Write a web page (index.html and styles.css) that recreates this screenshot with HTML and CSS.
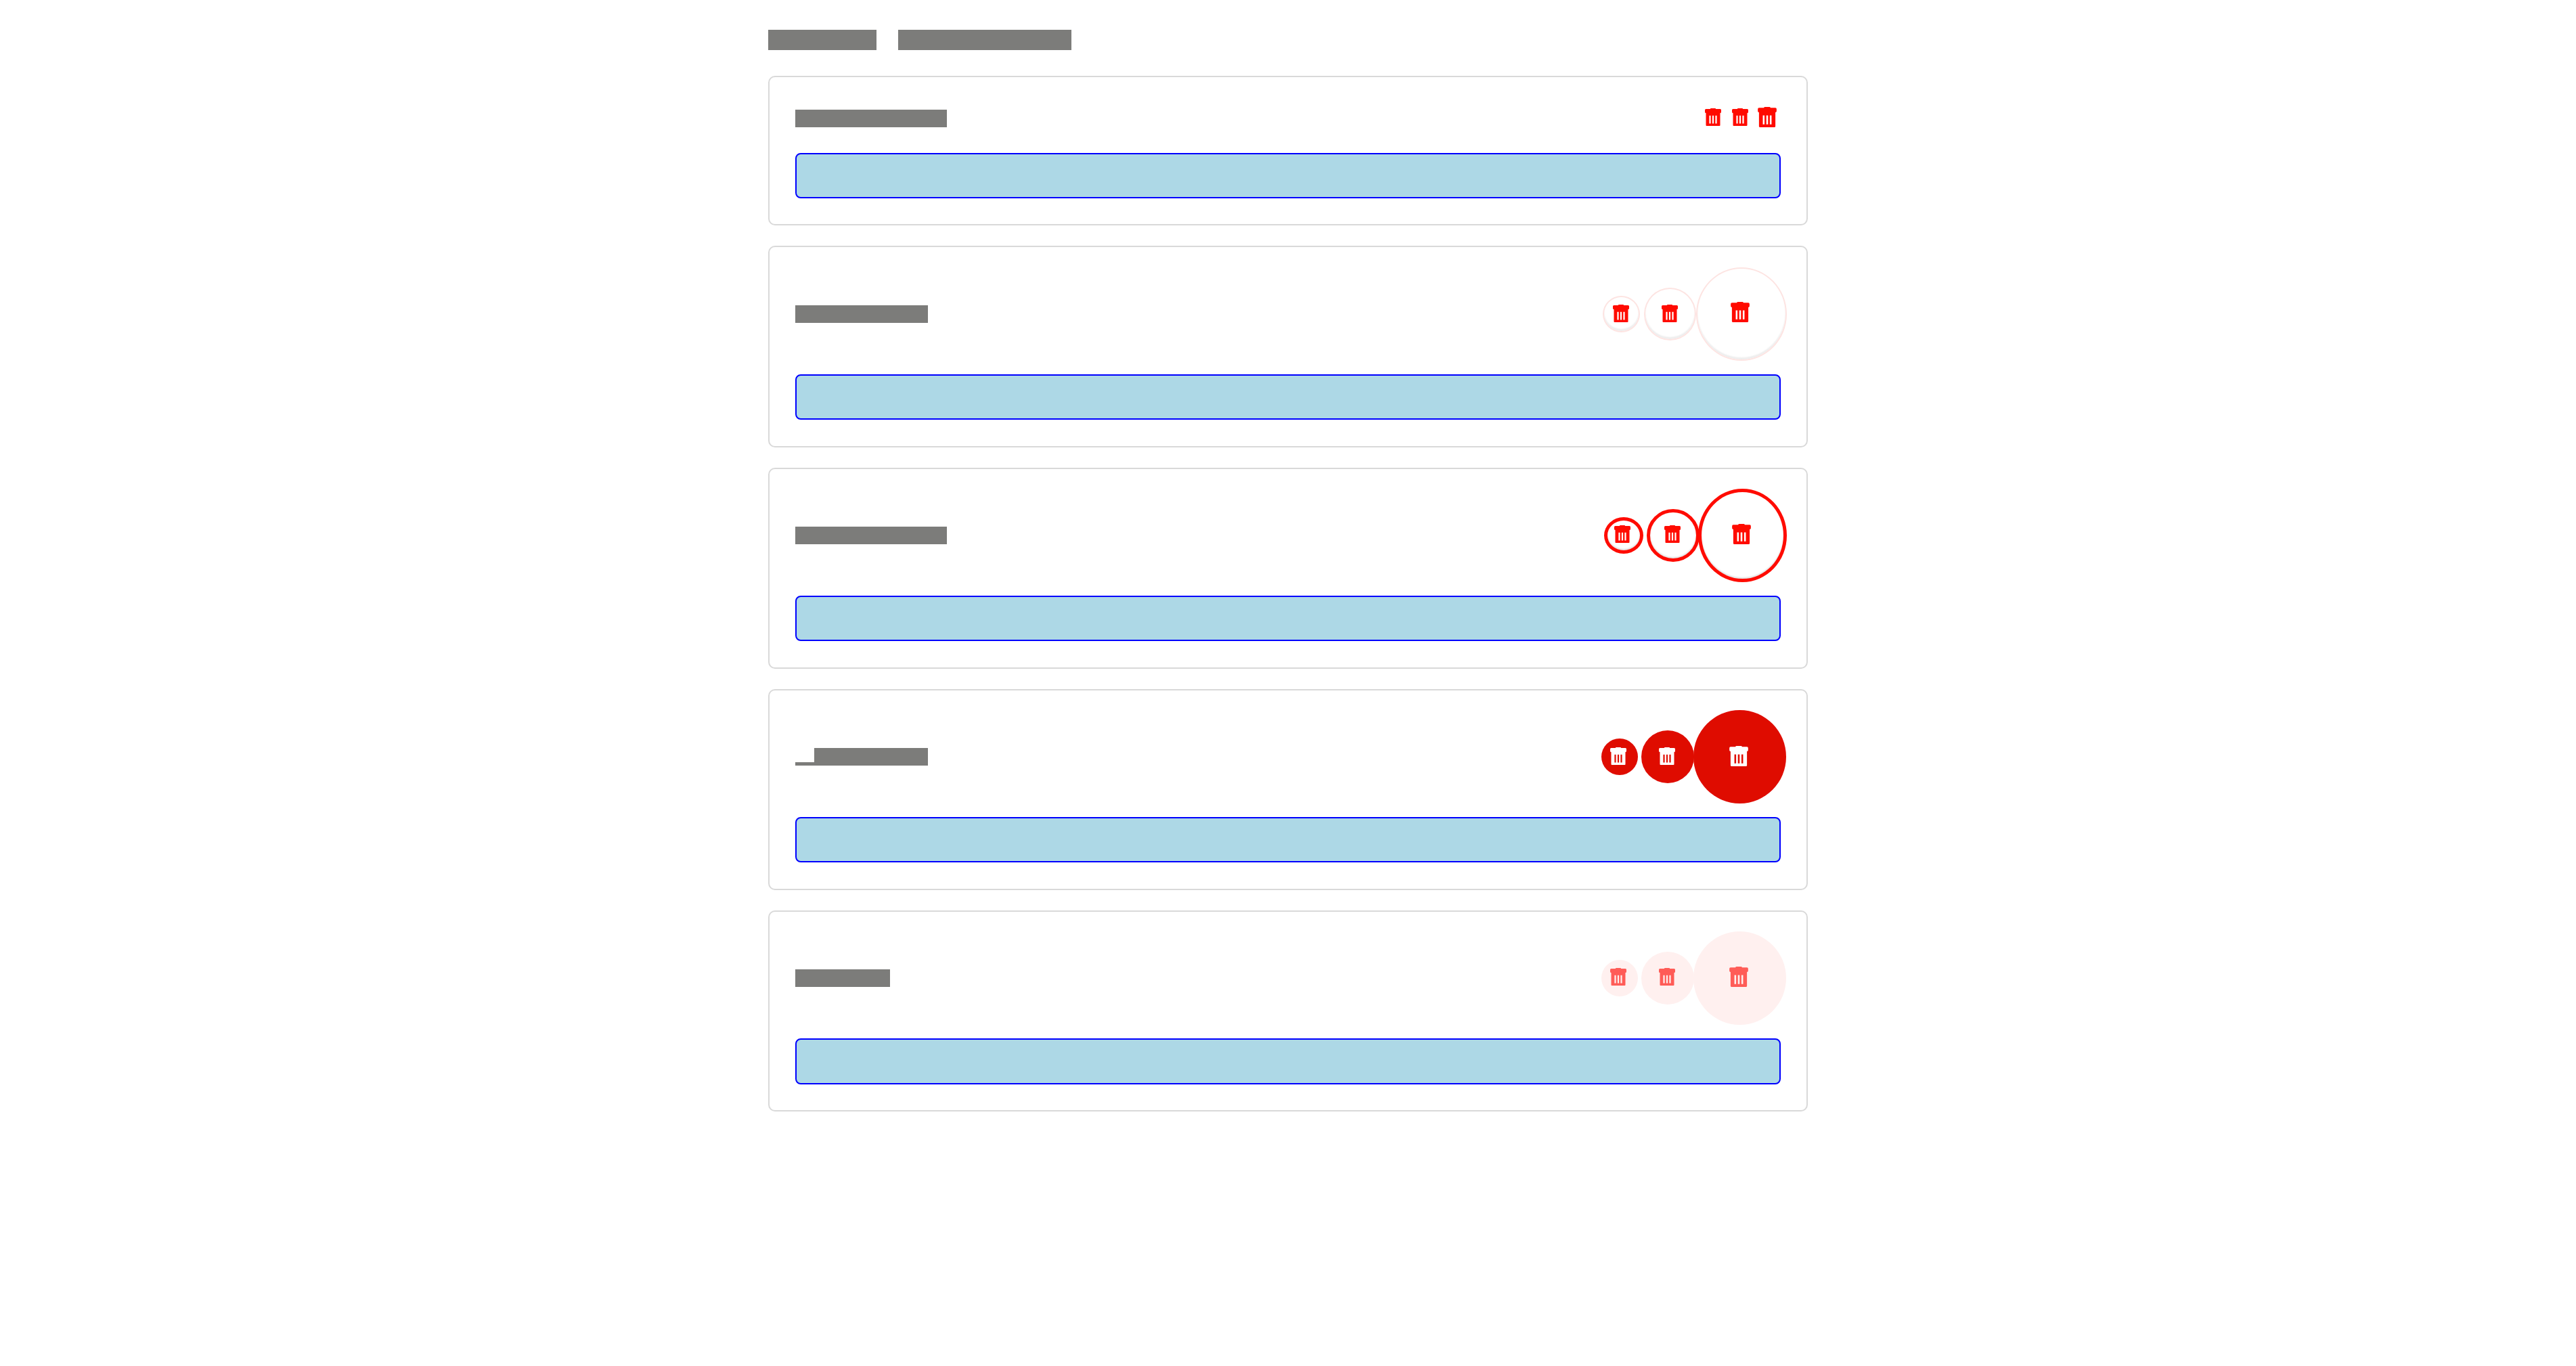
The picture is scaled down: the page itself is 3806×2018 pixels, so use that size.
FILE: index.html
```html
<!DOCTYPE html>
<html lang="en">
<head>
<meta charset="utf-8">
<title>Delete buttons</title>
<link rel="stylesheet" href="styles.css">
</head>
<body>
<svg class="sprite" aria-hidden="true">
  <symbol id="trash" viewBox="0 0 24 26">
    <path fill="currentColor" fill-rule="evenodd" d="M9 0h6q1 0 1.2 1h6.3Q24 1 24 2.5V5.5q0 1.5-1.5 1.5V25a1 1 0 0 1-1 1h-19a1 1 0 0 1-1-1V7Q0 7 0 5.5V2.5Q0 1 1.5 1h6.3Q8 0 9 0ZM6.4 10.8v11.6h2.2V10.8ZM10.9 10.8v11.6h2.2V10.8ZM15.4 10.8v11.6h2.2V10.8Z"/>
  </symbol>
</svg>
<main class="page">
  <nav class="nav">
    <div class="nav-item nav-item--short"></div>
    <div class="nav-item nav-item--long"></div>
  </nav>

  <section class="card card--plain">
    <div class="row">
      <div class="label label--224"></div>
      <div class="actions">
        <button class="btn btn--sm"><svg class="icon"><use href="#trash"/></svg></button>
        <button class="btn btn--md"><svg class="icon"><use href="#trash"/></svg></button>
        <button class="btn btn--lg"><svg class="icon icon--lg"><use href="#trash"/></svg></button>
      </div>
    </div>
    <div class="field"></div>
  </section>

  <section class="card card--ghost">
    <div class="row">
      <div class="label label--196"></div>
      <div class="actions">
        <button class="btn btn--sm"><svg class="icon"><use href="#trash"/></svg></button>
        <button class="btn btn--md"><svg class="icon"><use href="#trash"/></svg></button>
        <button class="btn btn--lg"><svg class="icon icon--lg"><use href="#trash"/></svg></button>
      </div>
    </div>
    <div class="field"></div>
  </section>

  <section class="card card--outline">
    <div class="row">
      <div class="label label--224"></div>
      <div class="actions">
        <button class="btn btn--sm"><svg class="icon"><use href="#trash"/></svg></button>
        <button class="btn btn--md"><svg class="icon"><use href="#trash"/></svg></button>
        <button class="btn btn--lg"><svg class="icon icon--lg"><use href="#trash"/></svg></button>
      </div>
    </div>
    <div class="field"></div>
  </section>

  <section class="card card--solid">
    <div class="row">
      <div class="label-group">
        <div class="label-underscore"></div>
        <div class="label label--168"></div>
      </div>
      <div class="actions">
        <button class="btn btn--sm"><svg class="icon"><use href="#trash"/></svg></button>
        <button class="btn btn--md"><svg class="icon"><use href="#trash"/></svg></button>
        <button class="btn btn--lg"><svg class="icon icon--lg"><use href="#trash"/></svg></button>
      </div>
    </div>
    <div class="field"></div>
  </section>

  <section class="card card--soft">
    <div class="row">
      <div class="label label--140"></div>
      <div class="actions">
        <button class="btn btn--sm"><svg class="icon"><use href="#trash"/></svg></button>
        <button class="btn btn--md"><svg class="icon"><use href="#trash"/></svg></button>
        <button class="btn btn--lg"><svg class="icon icon--lg"><use href="#trash"/></svg></button>
      </div>
    </div>
    <div class="field"></div>
  </section>
</main>
</body>
</html>
```
FILE: styles.css
```css
* { box-sizing: border-box; }

html, body {
  margin: 0;
  background: #fff;
  font-family: "Liberation Sans", Arial, sans-serif;
}

.sprite { display: none; }

.page {
  width: 1536px;
  margin: 0 auto;
  padding-top: 44px;
}

.nav {
  display: flex;
  gap: 32px;
  margin-bottom: 38px;
}

.nav-item { height: 30px; background: #7c7c7a; }
.nav-item--short { width: 160px; }
.nav-item--long { width: 256px; }

.card {
  border: 2px solid #d9d9d9;
  border-radius: 10px;
  padding: 29.6px 38px 38.4px;
  margin-bottom: 30px;
}

.row {
  display: flex;
  align-items: center;
  justify-content: space-between;
  min-height: 62.2px;
}

.label { height: 26px; background: #7c7c7a; }
.label--224 { width: 224px; }
.label--196 { width: 196px; }
.label--168 { width: 168px; }
.label--140 { width: 140px; }

.label-group { display: flex; align-items: flex-end; }
.label-underscore { width: 28px; height: 5px; background: #7c7c7a; }

.actions { display: flex; align-items: center; }

.field {
  height: 67.2px;
  margin-top: 20px;
  background: #add8e6;
  border: 2px solid #0000ff;
  border-radius: 8px;
}

.btn {
  display: flex;
  align-items: center;
  justify-content: center;
  margin: 0;
  padding: 0;
  border: 0 solid transparent;
  border-radius: 50%;
  background: transparent;
  color: #ff0b00;
}

.icon { display: block; width: 24px; height: 26px; }
.icon--lg { width: 28px; height: 30px; }

/* plain: icon only */
.card--plain .actions { margin-right: 6px; }
.card--plain .btn { padding-bottom: 4px; }
.card--plain .btn--md { margin-left: 16px; }
.card--plain .btn--lg { margin-left: 14px; }

/* shared circle heights */
.card--ghost .btn--sm, .card--outline .btn--sm, .card--solid .btn--sm, .card--soft .btn--sm { height: 54px; }
.card--ghost .btn--md, .card--outline .btn--md, .card--solid .btn--md, .card--soft .btn--md { height: 78px; }
.card--ghost .btn--lg, .card--outline .btn--lg, .card--solid .btn--lg, .card--soft .btn--lg { height: 138px; }

/* ghost */
.card--ghost .actions { margin-right: -9px; }
.card--ghost .btn {
  border-width: 2px;
  border-color: #fde4e2;
  box-shadow: inset 0 -3px 2px rgba(0, 0, 0, 0.07);
}
.card--ghost .btn--sm { width: 55px; padding: 0 1px 2px 0; }
.card--ghost .btn--md { width: 77px; margin-left: 6px; padding: 0 1px 2px 0; }
.card--ghost .btn--lg { width: 134px; padding: 0 4px 6px 0; }

/* outline */
.card--outline .actions { margin-right: -9px; }
.card--outline .btn {
  border-width: 5px;
  border-color: #ff0b00;
  box-shadow: inset 0 -2px 2px rgba(0, 0, 0, 0.12);
}
.card--outline .btn--sm { width: 58px; padding: 0 4px 5px 0; }
.card--outline .btn--md { width: 78px; margin-left: 5px; padding: 0 2px 5px 0; }
.card--outline .btn--lg { width: 131px; margin-left: -2px; padding: 0 3px 5px 0; }

/* solid */
.card--solid .actions { margin-right: -8px; }
.card--solid .btn { background: #df0c00; color: #fff; }
.card--solid .btn--sm { width: 54px; padding: 0 4px 3px 0; }
.card--solid .btn--md { width: 78px; margin-left: 5px; padding: 0 2px 3px 0; }
.card--solid .btn--lg { width: 137px; margin-left: -1px; padding: 0 3px 3px 0; }

/* soft */
.card--soft .actions { margin-right: -8px; }
.card--soft .btn { background: #fff0ef; color: #ff5c57; }
.card--soft .btn--sm { width: 54px; padding: 0 4px 5px 0; }
.card--soft .btn--md { width: 78px; margin-left: 5px; padding: 0 2px 5px 0; }
.card--soft .btn--lg { width: 137px; margin-left: -1px; padding: 0 3px 5px 0; }
```
